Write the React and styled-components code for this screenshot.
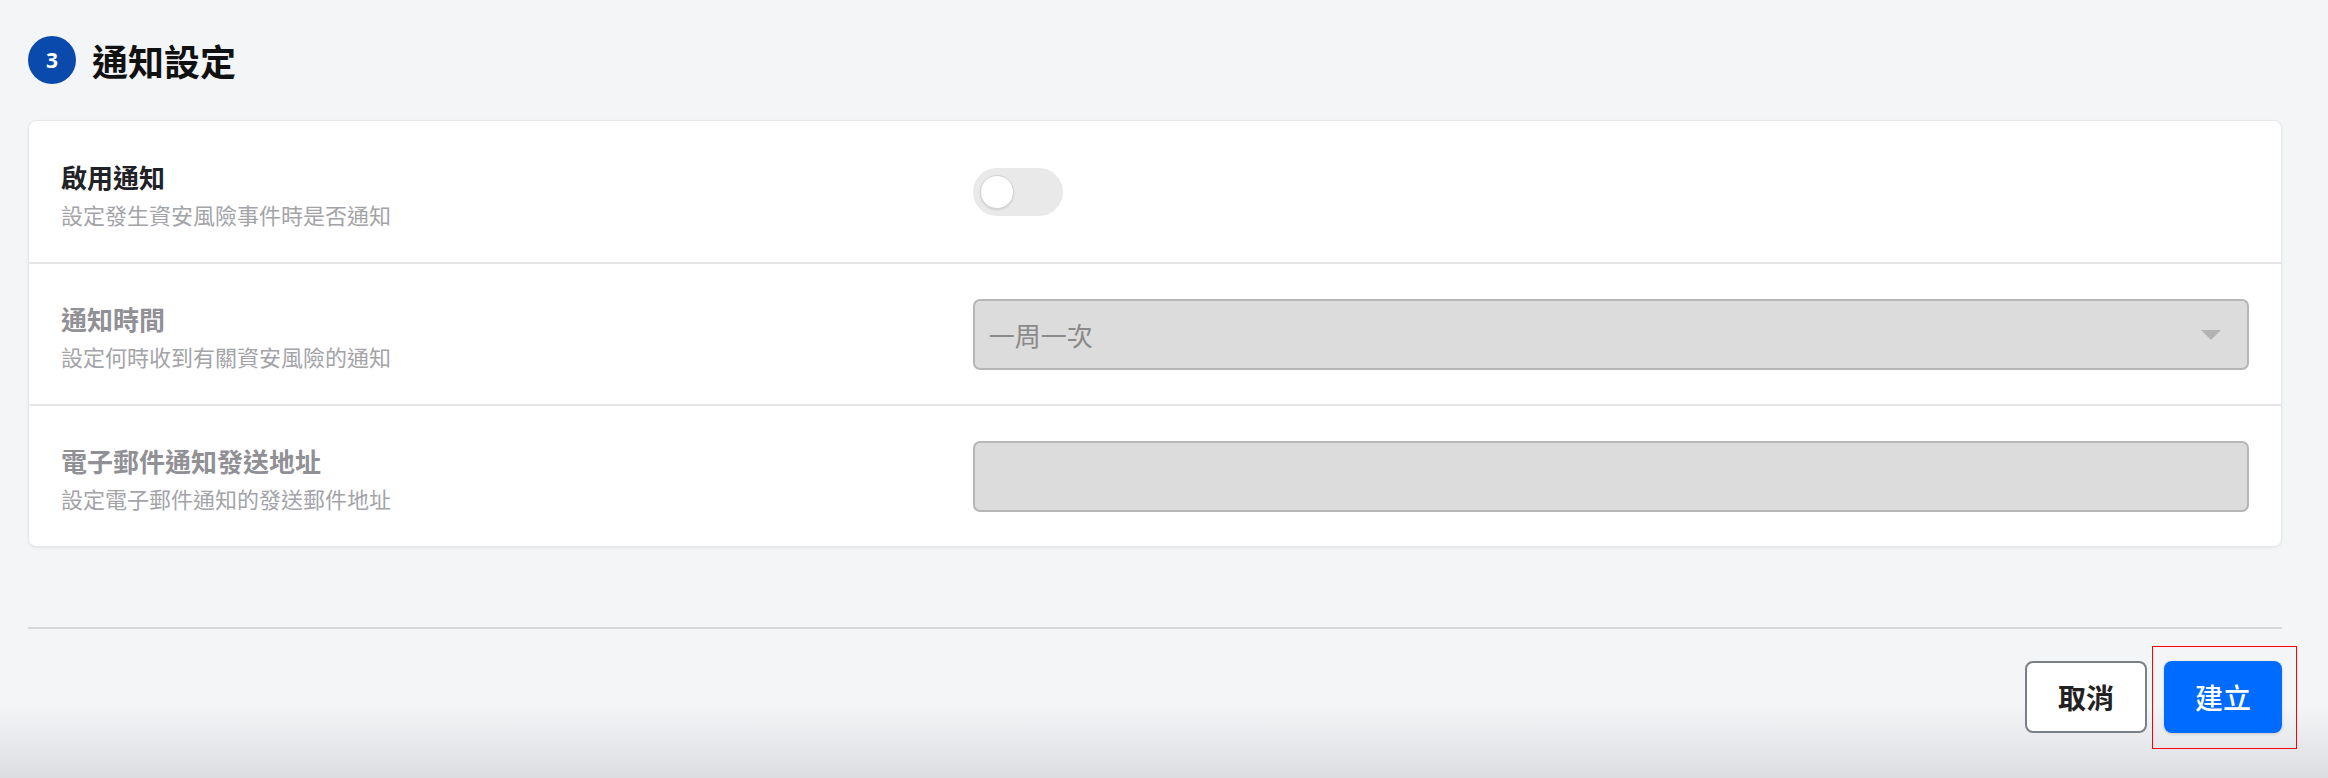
import styled, { createGlobalStyle } from "styled-components";

const GlobalStyle = createGlobalStyle`
    html, body {
        margin: 0;
        padding: 0;
    }
    body {
        font-family: "Noto Sans CJK TC", "Noto Sans", "Liberation Sans", sans-serif;
        background: #f4f5f7;
    }
    * {
        box-sizing: border-box;
    }
`;

const Page = styled.div`
    min-height: 778px;
    padding: 36px 46px 0 28px;
    background: linear-gradient(to bottom, #f4f5f7 0, #f4f5f7 705px, #dcdde0 778px);
`;

const SectionHeader = styled.div`
    display: flex;
    align-items: center;
    gap: 16px;
    height: 48px;
    margin-bottom: 36px;
`;

const StepBadge = styled.span`
    display: flex;
    align-items: center;
    justify-content: center;
    width: 48px;
    height: 48px;
    border-radius: 50%;
    background: #0a4aad;
    color: #fff;
    font-family: "Noto Sans", "Liberation Sans", sans-serif;
    font-size: 21px;
    font-weight: 700;
`;

const SectionTitle = styled.h2`
    margin: 0;
    font-size: 36px;
    font-weight: 700;
    color: #111;
    line-height: 48px;
`;

const Card = styled.div`
    background: #fff;
    border: 1px solid #e6e7e9;
    border-radius: 8px;
    box-shadow: 0 1px 3px rgba(0, 0, 0, 0.06);
`;

const Row = styled.div`
    display: grid;
    grid-template-columns: 5fr 7fr;
    align-items: center;
    min-height: ${(p) => (p.$first ? 141 : 142)}px;
    padding: 0 32px;
    border-top: ${(p) => (p.$first ? "none" : "2px solid #e6e6e8")};
`;

const Label = styled.div`
    display: flex;
    flex-direction: column;
    padding-top: 4px;
`;

const LabelTitle = styled.div`
    font-size: 26px;
    font-weight: 700;
    line-height: 36px;
    color: ${(p) => (p.$disabled ? "#909095" : "#1f2226")};
`;

const LabelHint = styled.div`
    margin-top: 4px;
    font-size: 22px;
    line-height: 30px;
    color: #a3a4a8;
`;

const Toggle = styled.div`
    position: relative;
    width: 90px;
    height: 48px;
    border-radius: 24px;
    background: #e9e9ea;
`;

const Knob = styled.span`
    position: absolute;
    top: 7px;
    left: 7px;
    width: 34px;
    height: 34px;
    border-radius: 50%;
    background: #fff;
    border: 1px solid #d4d4d4;
    box-shadow: 0 1px 2px rgba(0, 0, 0, 0.12);
`;

const Field = styled.div`
    display: flex;
    align-items: center;
    justify-content: space-between;
    height: 71px;
    padding: 0 26px 0 14px;
    background: #dcdcdc;
    border: 2px solid #b6b6b6;
    border-radius: 7px;
    font-size: 26px;
    color: #8a8a8a;
`;

const Caret = styled.span`
    width: 0;
    height: 0;
    border-left: 10px solid transparent;
    border-right: 10px solid transparent;
    border-top: 10px solid #b3b3b3;
    margin-top: 2px;
`;

const Divider = styled.hr`
    margin: 80px 0 0;
    border: none;
    border-top: 2px solid #d6d7da;
`;

const Actions = styled.div`
    display: flex;
    justify-content: flex-end;
    gap: 17px;
    padding-top: 32px;
`;

const Button = styled.button`
    height: 72px;
    padding: 0 31px;
    border-radius: 8px;
    font-family: inherit;
    font-size: 28px;
    font-weight: ${(p) => (p.$primary ? 500 : 700)};
    cursor: pointer;
    border: ${(p) => (p.$primary ? "none" : "2px solid #7b7f87")};
    background: ${(p) => (p.$primary ? "#006cff" : "#fff")};
    color: ${(p) => (p.$primary ? "#fff" : "#222")};
    box-shadow: ${(p) => (p.$primary ? "0 1px 3px rgba(0,0,0,0.15)" : "none")};
`;

const Highlight = styled.div`
    position: relative;

    &::after {
        content: "";
        position: absolute;
        top: -15px;
        left: -12px;
        right: -15px;
        bottom: -16px;
        border: 1px solid #ff0000;
        pointer-events: none;
    }
`;

const App = () => {
    return (
        <Page>
            <GlobalStyle />
            <SectionHeader>
                <StepBadge>3</StepBadge>
                <SectionTitle>通知設定</SectionTitle>
            </SectionHeader>

            <Card>
                <Row $first>
                    <Label>
                        <LabelTitle>啟用通知</LabelTitle>
                        <LabelHint>設定發生資安風險事件時是否通知</LabelHint>
                    </Label>
                    <div>
                        <Toggle>
                            <Knob />
                        </Toggle>
                    </div>
                </Row>
                <Row>
                    <Label>
                        <LabelTitle $disabled>通知時間</LabelTitle>
                        <LabelHint>設定何時收到有關資安風險的通知</LabelHint>
                    </Label>
                    <Field>
                        <span>一周一次</span>
                        <Caret />
                    </Field>
                </Row>
                <Row>
                    <Label>
                        <LabelTitle $disabled>電子郵件通知發送地址</LabelTitle>
                        <LabelHint>設定電子郵件通知的發送郵件地址</LabelHint>
                    </Label>
                    <Field />
                </Row>
            </Card>

            <Divider />

            <Actions>
                <Button>取消</Button>
                <Highlight>
                    <Button $primary>建立</Button>
                </Highlight>
            </Actions>
        </Page>
    );
};

export default App;
